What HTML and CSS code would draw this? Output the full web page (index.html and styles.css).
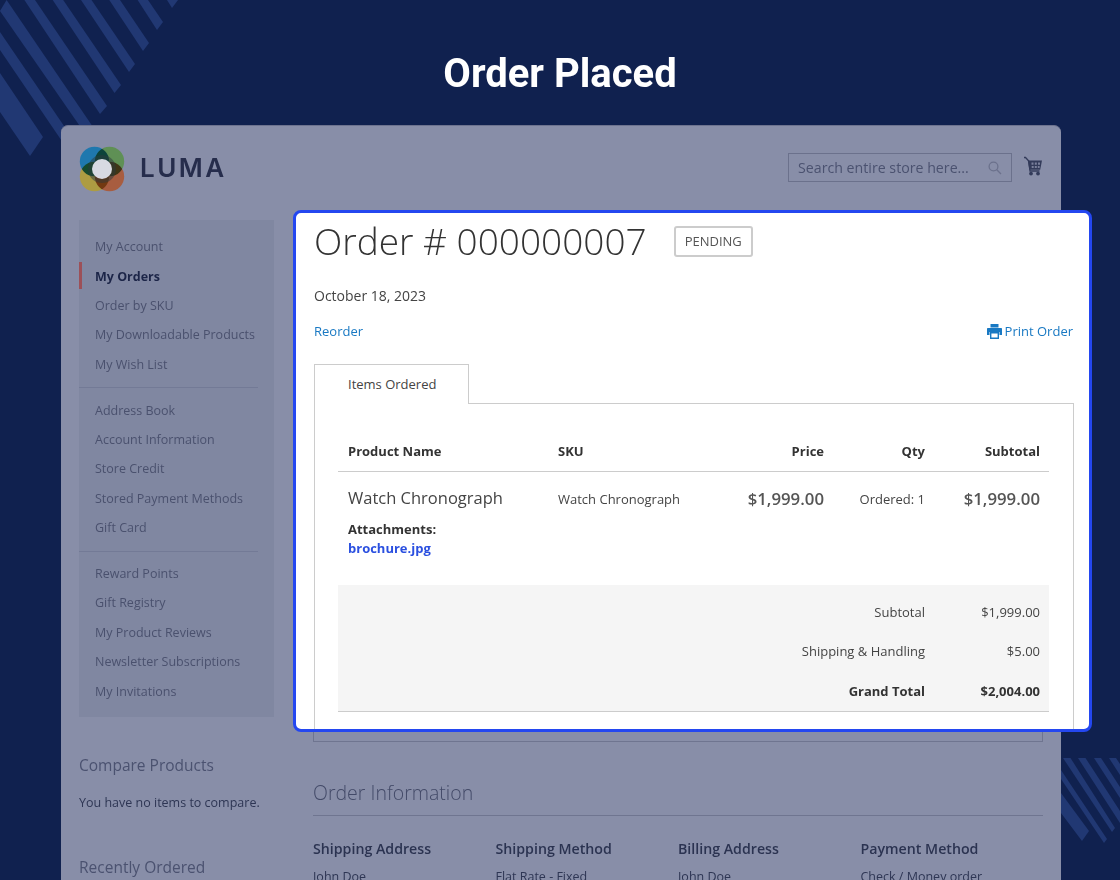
FILE: index.html
```html
<!DOCTYPE html>
<html lang="en">
<head>
<meta charset="utf-8">
<title>Order Placed</title>
<link rel="stylesheet" href="styles.css">
</head>
<body>
<div class="page">
  <svg class="stripes" width="1120" height="880" viewBox="0 0 1120 880" aria-hidden="true">
    <polygon points="167,0 178,0 172,8"/>
    <polygon points="137.6,0 148,0 163,22 157,30"/>
    <polygon points="109.3,0 120,0 149,43 143,51"/>
    <polygon points="81,0 91.5,0 135,64 129,72"/>
    <polygon points="52.700,0 63.2,0 121,85 114.5,93"/>
    <polygon points="24.400,0 35,0 107,106 100,114"/>
    <polygon points="0,11 6.6,0 93,127 86,135"/>
    <polygon points="0,32 79,148 72,156 0,50"/>
    <polygon points="0,73 43,137 30,156 0,112"/>
    <polygon points="1061,793 1089,831 1082,841 1061,813"/>
    <polygon points="1061,770 1107,839 1104,843 1061,779"/>
    <polygon points="1063,758 1070.5,758 1115,828 1112,832"/>
    <polygon points="1078,758 1085.5,758 1120,811 1120,823"/>
    <polygon points="1094,758 1101,758 1120,787 1120,798"/>
    <polygon points="1109,758 1116,758 1120,764 1120,775"/>
  </svg>

  <h1 class="headline">Order Placed</h1>

  <div class="store">
    <header class="store-header">
      <div class="brand">
        <svg class="brand-mark" width="46" height="46" viewBox="0 0 46 46" aria-hidden="true">
          <g class="petals">
            <circle class="petal petal-blue" cx="15.500" cy="15.500" r="14.700"/>
            <circle class="petal petal-green" cx="30.500" cy="15.500" r="14.700"/>
            <circle class="petal petal-yellow" cx="15.500" cy="30.500" r="14.700"/>
            <circle class="petal petal-red" cx="30.500" cy="30.500" r="14.700"/>
          </g>
          <circle class="brand-ring" cx="23" cy="23" r="12"/>
          <circle class="brand-hole" cx="23" cy="23" r="10"/>
        </svg>
        <span class="brand-name">LUMA</span>
      </div>
      <div class="header-tools">
        <div class="search">
          <span class="search-text">Search entire store here...</span>
          <svg width="14" height="14" viewBox="0 0 14 14" aria-hidden="true"><circle class="search-glass" cx="5.5" cy="5.5" r="4.4"/><path class="search-glass" d="M8.8 8.8 13 13"/></svg>
        </div>
        <svg class="cart" width="18" height="20" viewBox="0 0 18 20" aria-hidden="true">
          <path class="cart-line" d="M0 1.500h1.500l3.300 3.500 1.200 10h9.500"/>
          <path class="cart-fill" d="M3.800 4.500H18l-1.800 9.200H5.300z"/>
          <path class="cart-cut" d="M7.500 6.500h2v2.200h-2zM10.800 6.500h2v2.200h-2zM14 6.500h2v2.200h-2zM7.700 10h2v2h-2zM10.800 10h2v2h-2zM13.800 10h1.800v2h-1.800z"/>
          <circle class="cart-fill" cx="7" cy="17.600" r="1.900"/>
          <circle class="cart-fill" cx="14" cy="17.600" r="1.900"/>
        </svg>
      </div>
    </header>

    <div class="store-body">
      <aside class="side">
        <nav class="account-nav">
          <ul class="nav-group">
            <li class="nav-item">My Account</li>
            <li class="nav-item nav-current">My Orders</li>
            <li class="nav-item">Order by SKU</li>
            <li class="nav-item">My Downloadable Products</li>
            <li class="nav-item">My Wish List</li>
          </ul>
          <ul class="nav-group">
            <li class="nav-item">Address Book</li>
            <li class="nav-item">Account Information</li>
            <li class="nav-item">Store Credit</li>
            <li class="nav-item">Stored Payment Methods</li>
            <li class="nav-item">Gift Card</li>
          </ul>
          <ul class="nav-group">
            <li class="nav-item">Reward Points</li>
            <li class="nav-item">Gift Registry</li>
            <li class="nav-item">My Product Reviews</li>
            <li class="nav-item">Newsletter Subscriptions</li>
            <li class="nav-item">My Invitations</li>
          </ul>
        </nav>
        <h2 class="side-title side-compare">Compare Products</h2>
        <p class="side-note">You have no items to compare.</p>
        <h2 class="side-title side-recent">Recently Ordered</h2>
      </aside>

      <main class="store-main">
        <div class="order-frame"></div>
        <h2 class="info-title">Order Information</h2>
        <div class="info-grid">
          <div><h3 class="info-head">Shipping Address</h3><p class="info-text">John Doe</p></div>
          <div><h3 class="info-head">Shipping Method</h3><p class="info-text">Flat Rate - Fixed</p></div>
          <div><h3 class="info-head">Billing Address</h3><p class="info-text">John Doe</p></div>
          <div><h3 class="info-head">Payment Method</h3><p class="info-text">Check / Money order</p></div>
        </div>
      </main>
    </div>
  </div>

  <section class="focus">
    <div class="order-title-row">
      <h2 class="order-title">Order # 000000007</h2>
      <span class="status">Pending</span>
    </div>
    <p class="order-date">October 18, 2023</p>
    <div class="order-actions">
      <a class="link" href="#">Reorder</a>
      <a class="link print-link" href="#">
        <svg width="15" height="15" viewBox="0 0 15 15" aria-hidden="true">
          <path class="print-fill" d="M3.500 0h8v3.500h-8z"/>
          <path class="print-fill" d="M1 4h13c.6 0 1 .4 1 1v6h-2.500V8h-10v3H0V5c0-.6.4-1 1-1z"/>
          <path class="print-paper" d="M3.700 8.700h7.600v5.600H3.700z"/>
        </svg>
        <span>Print Order</span>
      </a>
    </div>
    <div class="tab">Items Ordered</div>
    <div class="tab-panel">
      <table class="items">
        <colgroup>
          <col class="col-name"><col class="col-sku"><col class="col-price"><col class="col-qty"><col class="col-sub">
        </colgroup>
        <thead>
          <tr>
            <th>Product Name</th>
            <th>SKU</th>
            <th class="num">Price</th>
            <th class="num">Qty</th>
            <th class="num cell-last">Subtotal</th>
          </tr>
        </thead>
        <tbody>
          <tr class="item-row">
            <td>
              <div class="item-name">Watch Chronograph</div>
              <div class="item-label">Attachments:</div>
              <a class="item-file" href="#">brochure.jpg</a>
            </td>
            <td class="item-sku">Watch Chronograph</td>
            <td class="num item-price">$1,999.00</td>
            <td class="num item-qty">Ordered: 1</td>
            <td class="num item-price cell-last">$1,999.00</td>
          </tr>
        </tbody>
        <tfoot>
          <tr class="total-first"><td class="num" colspan="4">Subtotal</td><td class="num">$1,999.00</td></tr>
          <tr><td class="num" colspan="4">Shipping &amp; Handling</td><td class="num">$5.00</td></tr>
          <tr class="grand"><td class="num" colspan="4">Grand Total</td><td class="num">$2,004.00</td></tr>
        </tfoot>
      </table>
    </div>
  </section>
</div>
</body>
</html>
```

FILE: styles.css
```css
* { box-sizing: border-box; }

html, body { margin: 0; padding: 0; }

body {
  font-family: "Open Sans", "Liberation Sans", sans-serif;
  color: #333;
}

.page {
  position: relative;
  width: 1120px;
  height: 880px;
  overflow: hidden;
  background: #10214f;
}

.stripes {
  position: absolute;
  left: 0;
  top: 0;
  fill: #213873;
}

.headline {
  position: relative;
  margin: 0;
  height: 125px;
  padding-top: 51px;
  font-family: Roboto, "Liberation Sans", sans-serif;
  font-size: 40px;
  line-height: 46px;
  font-weight: 700;
  text-align: center;
  color: #fff;
}

.store {
  position: relative;
  width: 1000px;
  margin-left: 61px;
  height: 755px;
  background: #888ea8;
  border-radius: 7px 7px 0 0;
  border-top: 1px solid #6d738f;
}

.store-header {
  display: flex;
  justify-content: space-between;
  align-items: flex-start;
  height: 94px;
  padding: 20px 19px 0 18px;
}

.brand {
  display: flex;
  align-items: center;
  gap: 15px;
}

.petals { isolation: isolate; }
.petal { mix-blend-mode: multiply; }
.petal-blue { fill: #1f78ae; }
.petal-green { fill: #5f9055; }
.petal-yellow { fill: #ad9c42; }
.petal-red { fill: #a85d40; }
.brand-ring { fill: none; stroke: #2b3a3c; stroke-width: 4; stroke-opacity: .5; }
.brand-hole { fill: #d8dae2; }

.brand-name {
  margin-top: -2px;
  font-family: Inter, Lato, sans-serif;
  font-size: 26px;
  line-height: 42px;
  font-weight: 600;
  letter-spacing: 2.500px;
  color: #262d4c;
}

.header-tools {
  display: flex;
  align-items: center;
  gap: 12px;
  padding-top: 7px;
}

.search {
  display: flex;
  align-items: center;
  justify-content: space-between;
  width: 224px;
  height: 29px;
  padding: 0 9px;
  border: 1px solid #6b718c;
}

.search-text {
  font-size: 14.200px;
  color: #4b5270;
}

.search-glass {
  fill: none;
  stroke: #6b718c;
  stroke-width: 1.300;
}

.cart { margin-top: -4px; }
.cart-line { fill: none; stroke: #333b5a; stroke-width: 1.300; }
.cart-fill { fill: #333b5a; }
.cart-cut { fill: #7a809b; }

.store-body {
  display: grid;
  grid-template-columns: 195px 730px;
  column-gap: 39px;
  padding: 0 18px;
}

.account-nav {
  height: 497px;
  padding: 12.200px 0 0;
  background: #8087a1;
}

.nav-group {
  list-style: none;
  margin: 0 16px 0 0;
  padding: 0 0 8px;
  border-bottom: 1px solid #737a96;
}

.nav-group + .nav-group { margin-top: 7.500px; }
.nav-group:last-child { border-bottom: 0; }

.nav-item {
  position: relative;
  height: 29.400px;
  padding-left: 16px;
  font-size: 12.500px;
  line-height: 29.400px;
  color: #4a516e;
}

.nav-current {
  font-weight: 700;
  color: #1c2548;
}

.nav-current::before {
  content: "";
  position: absolute;
  left: 0;
  top: 0;
  width: 3px;
  height: 27px;
  background: #9c5058;
}

.side-title {
  margin: 0;
  font-size: 15.500px;
  line-height: 22px;
  font-weight: 400;
  color: #4b5270;
}

.side-compare { margin-top: 37px; }

.side-note {
  margin: 18px 0 0;
  font-size: 12.500px;
  line-height: 18px;
  color: #2e3654;
}

.side-recent { margin-top: 44px; }

.order-frame {
  height: 522px;
  border: 1px solid #6f7590;
}

.info-title {
  margin: 38px 0 0;
  padding-bottom: 9px;
  border-bottom: 1px solid #6f7590;
  font-size: 19.500px;
  line-height: 26px;
  font-weight: 300;
  color: #434a68;
}

.info-grid {
  display: grid;
  grid-template-columns: repeat(4, 182.500px);
  margin-top: 23px;
}

.info-head {
  margin: 0;
  font-size: 14.200px;
  line-height: 20px;
  font-weight: 600;
  color: #2b3351;
}

.info-text {
  margin: 9px 0 0;
  font-size: 12.500px;
  line-height: 18px;
  color: #2e3654;
}

.focus {
  position: absolute;
  left: 293px;
  top: 210px;
  width: 799px;
  height: 522px;
  overflow: hidden;
  padding: 0 15px 0 18px;
  background: #fff;
  border: 3px solid #2447f0;
  border-radius: 8px;
}

.order-title-row {
  display: flex;
  align-items: center;
  gap: 27px;
  height: 56px;
}

.order-title {
  margin: 0;
  font-size: 37px;
  line-height: 54px;
  font-weight: 300;
  color: #333;
}

.status {
  height: 31px;
  padding: 0 9px;
  border: 2px solid #ccc;
  border-radius: 3px;
  font-size: 13px;
  line-height: 27px;
  text-transform: uppercase;
  color: #555;
}

.order-date {
  margin: 17px 0 0;
  font-size: 14px;
  line-height: 20px;
  color: #444;
}

.order-actions {
  display: flex;
  justify-content: space-between;
  align-items: center;
  margin-top: 15px;
  height: 20px;
}

.link {
  display: flex;
  align-items: center;
  gap: 3px;
  font-size: 13px;
  color: #1979c3;
  text-decoration: none;
}

.print-link { margin-right: 1px; }
.print-fill { fill: #1979c3; }
.print-paper { fill: #fff; stroke: #1979c3; stroke-width: 1.400; }

.tab {
  position: relative;
  width: 155px;
  height: 40px;
  margin-top: 23px;
  margin-bottom: -1px;
  padding-left: 33px;
  background: #fff;
  border: 1px solid #ccc;
  border-bottom: 0;
  font-size: 13px;
  line-height: 39px;
  color: #444;
}

.tab-panel {
  height: 400px;
  padding: 28px 24px 0 23px;
  border: 1px solid #ccc;
}

.items {
  width: 711px;
  table-layout: fixed;
  border-collapse: collapse;
  font-size: 13px;
}

.col-name { width: 210px; }
.col-sku { width: 166px; }
.col-price { width: 120px; }
.col-qty { width: 101px; }
.col-sub { width: 114px; }

.items th {
  height: 39px;
  padding: 0 10px;
  border-bottom: 1px solid #ccc;
  font-size: 13px;
  font-weight: 700;
  text-align: left;
  color: #333;
}

.items th.num, .items td.num { text-align: right; }
.items th.cell-last, .items td.cell-last { padding-right: 9px; }

.item-row td {
  height: 114px;
  padding: 14px 10px 0;
  vertical-align: top;
}

.item-name {
  font-size: 16.500px;
  line-height: 24px;
  color: #444;
}

.item-label {
  margin-top: 10px;
  font-weight: 700;
  line-height: 18px;
  color: #333;
}

.item-file {
  display: block;
  margin-top: 1px;
  font-weight: 700;
  line-height: 18px;
  color: #2b50e0;
  text-decoration: none;
}

.item-row .item-sku { padding-top: 18px; color: #444; }
.item-row .item-qty { padding-top: 18px; padding-right: 10px; color: #444; }

.item-row .item-price {
  padding-top: 15px;
  font-size: 16.800px;
  line-height: 24px;
  font-weight: 600;
  color: #555;
}

tfoot td {
  height: 39px;
  padding: 0 9px 11px 0;
  background: #f5f5f5;
  font-size: 13px;
  line-height: 18px;
  vertical-align: bottom;
  color: #444;
}

tfoot td[colspan] { padding-right: 10px; }

.total-first td { height: 47px; }

.grand td {
  height: 40px;
  font-weight: 700;
  color: #333;
  border-bottom: 1px solid #ccc;
}
```
